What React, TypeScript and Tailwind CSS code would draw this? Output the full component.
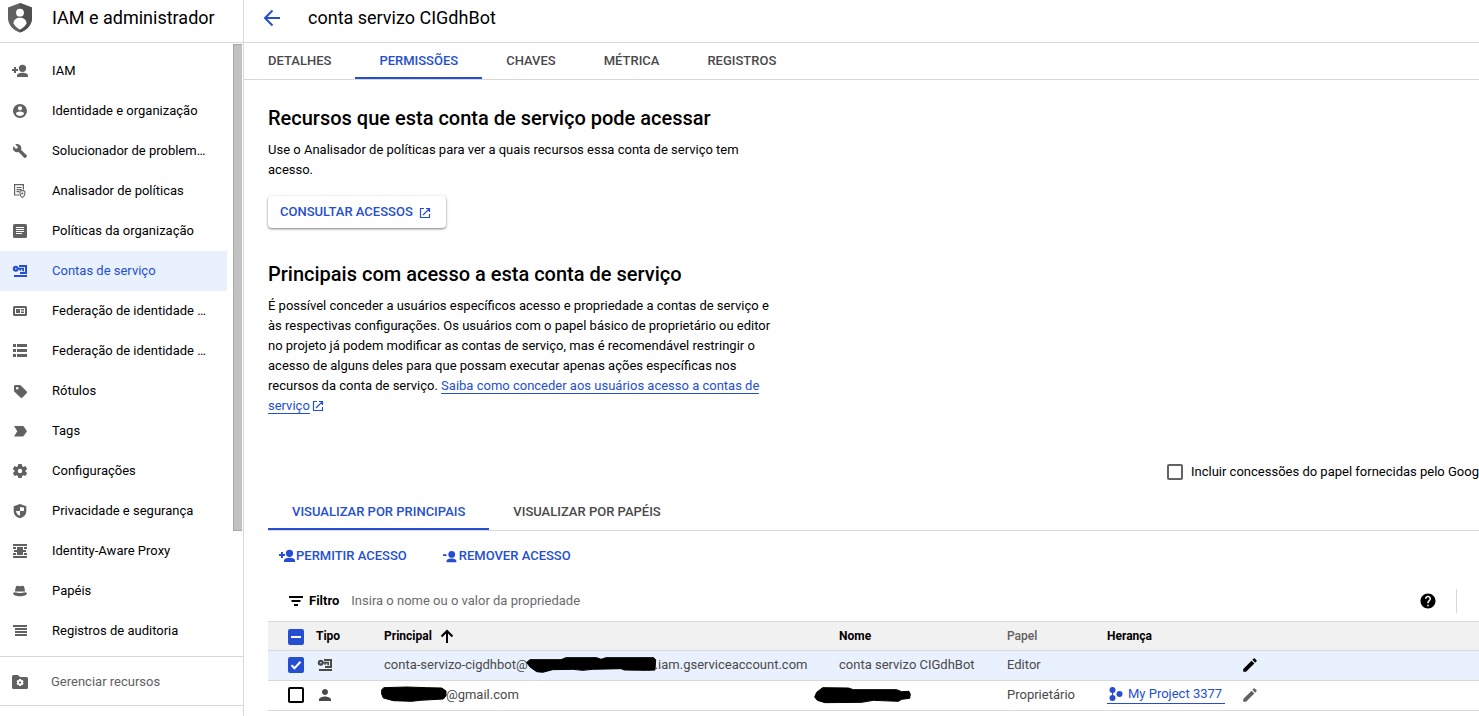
import { useEffect, useRef, useState } from "react";
import type { ReactNode } from "react";
import { MdEdit, MdHelp, MdPerson } from "react-icons/md";

type IconProps = { className?: string };

function Svg({ box = "0 0 18 18", className = "size-[18px]", children }: { box?: string; className?: string; children: ReactNode }) {
  return (
    <svg viewBox={box} className={`shrink-0 ${className}`} fill="currentColor" aria-hidden="true">
      {children}
    </svg>
  );
}

const PersonAddIcon = ({ className }: IconProps) => (
  <Svg className={className}>
    <path d="M3 5h2v2h2v2H5v2H3V9H1V7h2z" />
    <circle cx="11.5" cy="6.3" r="3.6" />
    <path d="M6 15v-1.4c0-2 3.2-2.8 5.5-2.8s5.5.8 5.5 2.8V15z" />
  </Svg>
);

const PersonRemoveIcon = ({ className }: IconProps) => (
  <Svg className={className}>
    <path d="M0 7h4v2H0z" />
    <circle cx="9.8" cy="7.300" r="3.800" />
    <path d="M4 16v-1.400c0-2 3.200-2.800 5.500-2.800s5.500.8 5.500 2.800V16z" />
  </Svg>
);

const ServiceAccountIcon = ({ className }: IconProps) => (
  <Svg className={className}>
    <path
      fillRule="evenodd"
      d="M4.800 3.800a3 3 0 0 1 2.800 2H13v3.400h-1.700V7.500H10v1.200H8.500V7.500h-.8A3 3 0 1 1 4.800 3.800zm0 2.200a.8.8 0 1 0 0 1.600.8.8 0 0 0 0-1.600z"
    />
    <path d="M8 3h8v9H9v-2h5V5H8zM3 13h13v2H3z" />
  </Svg>
);

const OpenInNewIcon = ({ className }: IconProps) => (
  <svg viewBox="0 0 12 12" className={`inline-block size-3 shrink-0 ${className ?? ""}`} fill="none" stroke="currentColor" strokeWidth="1.200" aria-hidden="true">
    <path d="M5 1.500H1.500v9h9V7M7 1.500h3.500V5M10.500 1.500L4 8" />
  </svg>
);

const ProjectIcon = () => (
  <Svg className="size-4" box="0 0 16 16">
    <circle cx="5.500" cy="4" r="3" />
    <circle cx="12.500" cy="8" r="3" />
    <circle cx="5.500" cy="12" r="3" />
    <path d="M5 4h1v8H5z" />
  </Svg>
);

const ShieldPerson = () => (
  <svg viewBox="0 0 24 30" className="h-[30px] w-6 shrink-0" aria-hidden="true">
    <path d="M12 0l12 4.500v10.500c0 7-5 12-12 14.500C5 27 0 22 0 15V4.500z" fill="#616161" />
    <path d="M12 0l12 4.500v10.500c0 7-5 12-12 14.500z" fill="#505050" />
    <circle cx="12" cy="9.700" r="3.900" fill="#fff" />
    <path d="M5.500 20.500c0-3.700 3-5.700 6.500-5.700s6.500 2 6.500 5.700c-1.700 2.700-3.700 4.700-6.500 6-2.800-1.300-4.800-3.300-6.500-6z" fill="#fff" />
  </svg>
);

const navItems: { label: string; icon: ReactNode; active?: boolean }[] = [
  { label: "IAM", icon: <PersonAddIcon /> },
  {
    label: "Identidade e organização",
    icon: (
      <Svg box="-1 -1 26 26">
        <path d="M12 2C6.480 2 2 6.480 2 12s4.480 10 10 10 10-4.480 10-10S17.520 2 12 2zm0 3c1.660 0 3 1.340 3 3s-1.340 3-3 3-3-1.340-3-3 1.340-3 3-3zm0 14.200c-2.500 0-4.710-1.280-6-3.220.03-1.990 4-3.080 6-3.080 1.990 0 5.970 1.090 6 3.080-1.290 1.940-3.500 3.220-6 3.220z" />
      </Svg>
    ),
  },
  {
    label: "Solucionador de problem…",
    icon: (
      <Svg box="-2 -2 28 28">
        <path d="M22.700 19l-9.100-9.100c.9-2.300.4-5-1.500-6.900-2-2-5-2.400-7.400-1.300L9 6 6 9 1.600 4.700C.4 7.100.9 10.100 2.900 12.100c1.900 1.900 4.600 2.400 6.900 1.500l9.100 9.100c.4.4 1 .4 1.400 0l2.300-2.300c.5-.4.5-1.100.1-1.400z" />
      </Svg>
    ),
  },
  {
    label: "Analisador de políticas",
    icon: (
      <Svg>
        <path d="M8.500 13H3.600V2.600h8.800V7.500M5.500 5.500h5M5.500 7.600h5M5.500 9.700h2.500" fill="none" stroke="currentColor" strokeWidth="1.200" />
        <path d="M9 9.300l2.300-.9 2.500.9v2.500c0 1.700-1 3-2.500 3.700-1.500-.7-2.300-2-2.300-3.700z" fill="none" stroke="currentColor" strokeWidth="1.100" />
        <circle cx="11.300" cy="11.500" r="1.100" />
      </Svg>
    ),
  },
  {
    label: "Políticas da organização",
    icon: (
      <Svg>
        <path fillRule="evenodd" d="M3.500 2h11A1.500 1.500 0 0 1 16 3.500v11a1.500 1.500 0 0 1-1.500 1.500h-11A1.500 1.500 0 0 1 2 14.500v-11A1.500 1.500 0 0 1 3.500 2zM5 5v1h8V5zm0 2v1h8V7zm0 2v1h8V9zm0 2v1h6v-1z" />
      </Svg>
    ),
  },
  { label: "Contas de serviço", icon: <ServiceAccountIcon />, active: true },
  {
    label: "Federação de identidade …",
    icon: (
      <Svg>
        <path fillRule="evenodd" d="M3.500 4h11A1.500 1.500 0 0 1 16 5.500v7a1.500 1.500 0 0 1-1.500 1.500h-11A1.500 1.500 0 0 1 2 12.500v-7A1.500 1.500 0 0 1 3.500 4zM4 6v6h10V6zm1 1h4v4H5zm5 0h3v1.500h-3zm0 2.500h3V11h-3z" />
      </Svg>
    ),
  },
  {
    label: "Federação de identidade …",
    icon: (
      <Svg>
        <path d="M2 2h3v3H2zM6 2h10v3H6zM2 7h3v3H2zM6 7h10v3H6zM2 12h3v3H2zM6 12h10v3H6z" />
      </Svg>
    ),
  },
  {
    label: "Rótulos",
    icon: (
      <Svg>
        <path fillRule="evenodd" d="M4.300 3h4.400c.4 0 .8.200 1.100.5l5.800 5.700c.6.600.6 1.500 0 2.100l-4.100 4.200c-.6.600-1.500.6-2.100 0L3.500 9.800c-.3-.3-.5-.7-.5-1.100V4.300C3 3.600 3.600 3 4.300 3zm1.900 1.900a1.300 1.300 0 1 0 0 2.600 1.300 1.300 0 0 0 0-2.600z" />
      </Svg>
    ),
  },
  {
    label: "Tags",
    icon: (
      <Svg>
        <path d="M3 4h8.500c.5 0 1 .2 1.300.6L16 9.200l-3.200 4.600c-.3.400-.8.700-1.300.7H3l3.300-5.300z" />
      </Svg>
    ),
  },
  {
    label: "Configurações",
    icon: (
      <Svg>
        <path
          fillRule="evenodd"
          d="M7.300 2h3.400l.4 2.100 1.300.8 2.100-.8 1.700 3L14.500 8.500v1.200l1.700 1.300-1.700 3-2.100-.8-1.300.8-.4 2H7.300l-.4-2-1.300-.8-2.100.8-1.700-3 1.700-1.300V8.500L1.800 7.100l1.700-3 2.100.8 1.300-.8zM9 6.800a2.200 2.200 0 1 0 0 4.400 2.200 2.200 0 0 0 0-4.400z"
        />
      </Svg>
    ),
  },
  {
    label: "Privacidade e segurança",
    icon: (
      <Svg>
        <path fillRule="evenodd" d="M9 2l6.300 2.200v5c0 3.500-2.600 6-6.300 7-3.700-1-6.300-3.500-6.300-7v-5zM9 5v4H5c.2 2.300 1.700 4 4 4.700V9h4V5.500z" />
      </Svg>
    ),
  },
  {
    label: "Identity-Aware Proxy",
    icon: (
      <Svg>
        <path d="M2 2h14v2H2zM2 14h14v2H2zM6 5h6v8H6zM2 5h3v2H2zM3 8h12v2H3zM2 11h3v2H2zM13 5h3v2h-3zM13 11h3v2h-3z" />
      </Svg>
    ),
  },
  {
    label: "Papéis",
    icon: (
      <Svg>
        <path d="M5.500 4c1-.8 2 .2 3.500.2S11.500 3.200 12.500 4c.8.700 1.300 3 1.500 5.500H4c.2-2.500.7-4.800 1.500-5.500zM2 11.200c.7-.7 1.300-.9 2-.9 1.500.5 3 .7 5 .7s3.500-.2 5-.7c.7 0 1.300.2 2 .9-.2 1.800-3 3-7 3s-6.800-1.200-7-3z" />
      </Svg>
    ),
  },
  {
    label: "Registros de auditoria",
    icon: (
      <Svg>
        <path d="M2 3h14v2H2zM4 6h12v2H4zM4 9h12v2H4zM4 12h12v2H4z" />
      </Svg>
    ),
  },
];

function Tick({ label, state = "off", tone = "text-black" }: { label: string; state?: "off" | "on" | "mixed"; tone?: string }) {
  const [checked, setChecked] = useState(state === "on");
  const [mixed, setMixed] = useState(state === "mixed");
  const ref = useRef<HTMLInputElement>(null);
  useEffect(() => {
    if (ref.current) ref.current.indeterminate = mixed;
  }, [mixed]);
  return (
    <span className={`grid size-4 shrink-0 ${tone}`}>
      <input
        ref={ref}
        type="checkbox"
        aria-label={label}
        checked={checked}
        onChange={(e) => {
          setMixed(false);
          setChecked(e.target.checked);
        }}
        className="col-start-1 row-start-1 m-0 size-4 appearance-none rounded-xs border-2 border-current bg-white checked:border-[#254fd0] checked:bg-[#254fd0] indeterminate:border-[#254fd0] indeterminate:bg-[#254fd0]"
      />
      <svg viewBox="0 0 16 16" className="pointer-events-none col-start-1 row-start-1 size-4" fill="none" stroke="#fff" strokeWidth="2" aria-hidden="true">
        {mixed ? <path d="M3 8h10" /> : checked ? <path d="M3.500 8.200l3 3 6-6.400" /> : null}
      </svg>
    </span>
  );
}

function Tab({ children, active = false }: { children: ReactNode; active?: boolean }) {
  return (
    <button
      type="button"
      role="tab"
      aria-selected={active}
      className={`shrink-0 border-b-2 px-6 pt-0.5 text-[13px] font-medium leading-5 whitespace-nowrap ${active ? "border-[#254fd0] text-[#254fd0]" : "border-transparent text-[#494949]"}`}
    >
      {children}
    </button>
  );
}

const Mask = ({ box, size, points }: { box: string; size: string; points: string }) => (
  <svg viewBox={box} className={`inline-block overflow-visible ${size}`} aria-hidden="true">
    <polygon points={points} fill="#000" stroke="#000" strokeWidth="3" strokeLinejoin="round" />
  </svg>
);

export default function App() {
  return (
    <div className="flex min-h-screen overflow-x-hidden bg-white font-[Roboto,sans-serif] text-[13px] leading-5 text-black">
      <aside className="flex w-[244px] shrink-0 flex-col border-r border-[#d8d8d8]">
        <div className="flex h-[43px] items-center gap-5 border-b border-[#d8d8d8] pb-1.5 pl-2 text-lg leading-6">
          <ShieldPerson />
          <span className="whitespace-nowrap">IAM e administrador</span>
        </div>
        <div className="flex justify-between border-b border-[#d8d8d8]">
          <nav className="w-[227px] pt-2 pb-[5px]">
            {navItems.map((item, i) => (
              <a
                key={i}
                href="#"
                className={`flex h-10 items-center gap-[23px] pl-[11px] ${item.active ? "bg-[#e9f1fe] text-[#254fd0]" : "text-[#616161]"}`}
              >
                {item.icon}
                <span className={`whitespace-nowrap ${item.active ? "" : "text-black"}`}>{item.label}</span>
              </a>
            ))}
          </nav>
          <div className="mt-px mr-px h-[487px] w-[9px] border border-r-0 border-[#a8a8a8] bg-[#c1c1c1]" />
        </div>
        <a href="#" className="flex h-[49px] items-center gap-[22px] border-b border-[#d8d8d8] pt-0.5 pl-[11px] text-[#616161]">
          <Svg>
            <path
              fillRule="evenodd"
              d="M2.500 2H7l2 2h6.500A1.500 1.500 0 0 1 17 5.500v9a1.500 1.500 0 0 1-1.500 1.500h-13A1.500 1.500 0 0 1 1 14.500v-11A1.500 1.500 0 0 1 2.500 2zM8.200 6l-.4 1.300-1.300-.3-.9 1.500.9 1-.9 1 .9 1.600 1.300-.3.4 1.300h1.800l.4-1.300 1.300.3.9-1.600-.9-1 .9-1-.9-1.500-1.300.3L10 6zM9 8.500a1.100 1.100 0 1 1 0 2.200 1.100 1.100 0 0 1 0-2.200z"
            />
          </Svg>
          <span>Gerenciar recursos</span>
        </a>
      </aside>

      <main className="min-w-0 flex-1">
        <header className="flex h-[43px] items-center gap-[26px] border-b border-[#d8d8d8] pb-1.5 pl-[18px]">
          <button type="button" aria-label="Voltar" className="text-[#254fd0]">
            <svg viewBox="0 0 20 20" className="size-5" fill="none" stroke="currentColor" strokeWidth="2" aria-hidden="true">
              <path d="M18 10H3.500M10.500 2.500L3 10l7.500 7.500" />
            </svg>
          </button>
          <h1 className="text-lg leading-6">conta servizo CIGdhBot</h1>
        </header>
        <div role="tablist" className="flex h-[37px] border-b border-[#d8d8d8]">
          <Tab>DETALHES</Tab>
          <Tab active>PERMISSÕES</Tab>
          <Tab>CHAVES</Tab>
          <Tab>MÉTRICA</Tab>
          <Tab>REGISTROS</Tab>
        </div>

        <div className="pt-[26px] pl-6">
          <section className="max-w-[508px]">
            <h2 className="text-xl leading-6 font-medium whitespace-nowrap">Recursos que esta conta de serviço pode acessar</h2>
            <p className="mt-2.5">Use o Analisador de políticas para ver a quais recursos essa conta de serviço tem acesso.</p>
            <button
              type="button"
              className="mt-4 flex h-8 items-center gap-1.5 rounded-sm pr-[15px] pl-3 font-medium text-[#254fd0] shadow-[0_1px_3px_rgba(0,0,0,0.3),0_1px_2px_rgba(0,0,0,0.25)]"
            >
              CONSULTAR ACESSOS
              <OpenInNewIcon className="mt-0.5" />
            </button>
          </section>
          <section className="mt-[34px] max-w-[508px]">
            <h2 className="text-xl leading-6 font-medium whitespace-nowrap">Principais com acesso a esta conta de serviço</h2>
            <p className="mt-2.5">
              É possível conceder a usuários específicos acesso e propriedade a contas de serviço e às respectivas configurações. Os usuários com o papel
              básico de proprietário ou editor no projeto já podem modificar as contas de serviço, mas é recomendável restringir o acesso de alguns deles
              para que possam executar apenas ações específicas nos recursos da conta de serviço.{" "}
              <a href="#" className="text-[#254fd0]">
                <span className="border-b border-current">Saiba como conceder aos usuários acesso a contas de serviço</span>
                <OpenInNewIcon className="mb-0.5 ml-0.5" />
              </a>
            </p>
          </section>

          <label className="mt-[46px] flex items-center justify-end gap-2 whitespace-nowrap">
            <Tick label="Incluir concessões do papel fornecidas pelo Goog" tone="text-[#616161]" />
            Incluir concessões do papel fornecidas pelo Goog
          </label>

          <div role="tablist" className="mt-3 flex h-[37px] border-b border-[#d8d8d8]">
            <Tab active>VISUALIZAR POR PRINCIPAIS</Tab>
            <Tab>VISUALIZAR POR PAPÉIS</Tab>
          </div>

          <div className="flex h-[50px] items-center gap-9 pl-2.5 font-medium text-[#254fd0]">
            <button type="button" className="flex items-center">
              <PersonAddIcon />
              PERMITIR ACESSO
            </button>
            <button type="button" className="flex items-center">
              <PersonRemoveIcon className="h-[18px] w-4" />
              REMOVER ACESSO
            </button>
          </div>

          <div className="flex h-10 items-center pl-5">
            <Svg className="size-4" box="0 0 16 16">
              <path d="M1 3h14v2H1zM3.500 7h9v2h-9zM6 11h4v2H6z" />
            </Svg>
            <label htmlFor="filter" className="ml-[5px] font-bold">
              Filtro
            </label>
            <input
              id="filter"
              placeholder="Insira o nome ou o valor da propriedade"
              className="ml-3 min-w-0 flex-1 outline-none placeholder:text-[#6b6b6b]"
            />
            <button type="button" aria-label="Ajuda">
              <MdHelp className="size-[18px]" />
            </button>
            <span className="ml-[19px] h-6 w-[23px] border-l border-[#d8d8d8]" />
          </div>

          <table className="w-full table-fixed border-collapse text-left text-[#494949]">
            <colgroup>
              <col className="w-12" />
              <col className="w-[68px]" />
              <col className="w-[455px]" />
              <col className="w-[168px]" />
              <col className="w-[100px]" />
              <col className="w-[134px]" />
              <col />
            </colgroup>
            <thead>
              <tr className="h-[29px] border-y border-[#d8d8d8] bg-[#f1f1f1] text-xs text-black">
                <th className="p-0 pt-0.5 pl-5">
                  <Tick label="Selecionar tudo" state="mixed" />
                </th>
                <th className="p-0 font-bold">Tipo</th>
                <th className="p-0 font-bold">
                  <span className="flex items-center gap-[7px]">
                    Principal
                    <svg viewBox="0 0 16 16" className="size-4" fill="none" stroke="currentColor" strokeWidth="2" aria-hidden="true">
                      <path d="M8 15V3M2.500 8.500L8 3l5.500 5.500" />
                    </svg>
                  </span>
                </th>
                <th className="p-0 font-bold">Nome</th>
                <th className="p-0 font-medium text-[#616161]">Papel</th>
                <th className="p-0 font-bold">Herança</th>
                <th className="p-0" aria-label="Ações" />
              </tr>
            </thead>
            <tbody>
              <tr className="h-[30px] border-b border-[#d8d8d8] bg-[#e9f1fe]">
                <td className="p-0 pb-0.5 pl-5">
                  <Tick label="Selecionar conta servizo CIGdhBot" state="on" />
                </td>
                <td className="p-0 pb-0.5">
                  <ServiceAccountIcon />
                </td>
                <td className="p-0 pb-0.5 whitespace-nowrap">
                  conta-servizo-cigdhbot@
                  <Mask
                    box="81 108 381 54"
                    size="h-[18px] w-[127px]"
                    points="77,127 87,119 180,119 195,113 287,113 300,118 315,113 458,113 464,119 462,150 440,151 370,150 360,146 275,148 245,151 215,148 155,149 125,157 107,155 87,141"
                  />
                  .iam.gserviceaccount.com
                </td>
                <td className="p-0 pb-0.5">conta servizo CIGdhBot</td>
                <td className="p-0 pb-0.5">Editor</td>
                <td className="p-0 pb-0.5" />
                <td className="p-0 pb-0.5">
                  <button type="button" aria-label="Editar" className="block text-black">
                    <MdEdit className="size-[18px]" />
                  </button>
                </td>
              </tr>
              <tr className="h-[30px] border-b border-[#d8d8d8]">
                <td className="p-0 pb-0.5 pl-5">
                  <Tick label="Selecionar proprietário" />
                </td>
                <td className="p-0 pb-0.5">
                  <MdPerson className="size-[18px]" aria-hidden="true" />
                </td>
                <td className="p-0 pb-0.5 whitespace-nowrap">
                  <Mask
                    box="372 321 186 54"
                    size="h-[18px] w-[62px]"
                    points="372,326 440,324 500,326 545,327 558,336 558,350 550,360 480,364 455,367 400,365 370,357 365,345 365,332"
                  />
                  @gmail.com
                </td>
                <td className="p-0 pb-0.5">
                  <Mask
                    box="1017 195 216 54"
                    size="h-[18px] w-[72px]"
                    points="944,228 950,214 968,200 1045,201 1060,206 1190,206 1205,212 1227,211 1231,220 1229,232 1205,235 1195,241 1120,238 1085,244 975,245 952,238"
                  />
                </td>
                <td className="p-0 pb-0.5">Proprietário</td>
                <td className="p-0 pb-0.5">
                  <a href="#" className="flex h-[18px] w-fit items-center gap-[5px] border-b border-current pr-[3px] whitespace-nowrap text-[#254fd0]">
                    <ProjectIcon />
                    My Project 3377
                  </a>
                </td>
                <td className="p-0 pb-0.5">
                  <button type="button" aria-label="Editar" className="block text-[#616161]">
                    <MdEdit className="size-[18px]" />
                  </button>
                </td>
              </tr>
            </tbody>
          </table>
        </div>
      </main>
    </div>
  );
}
